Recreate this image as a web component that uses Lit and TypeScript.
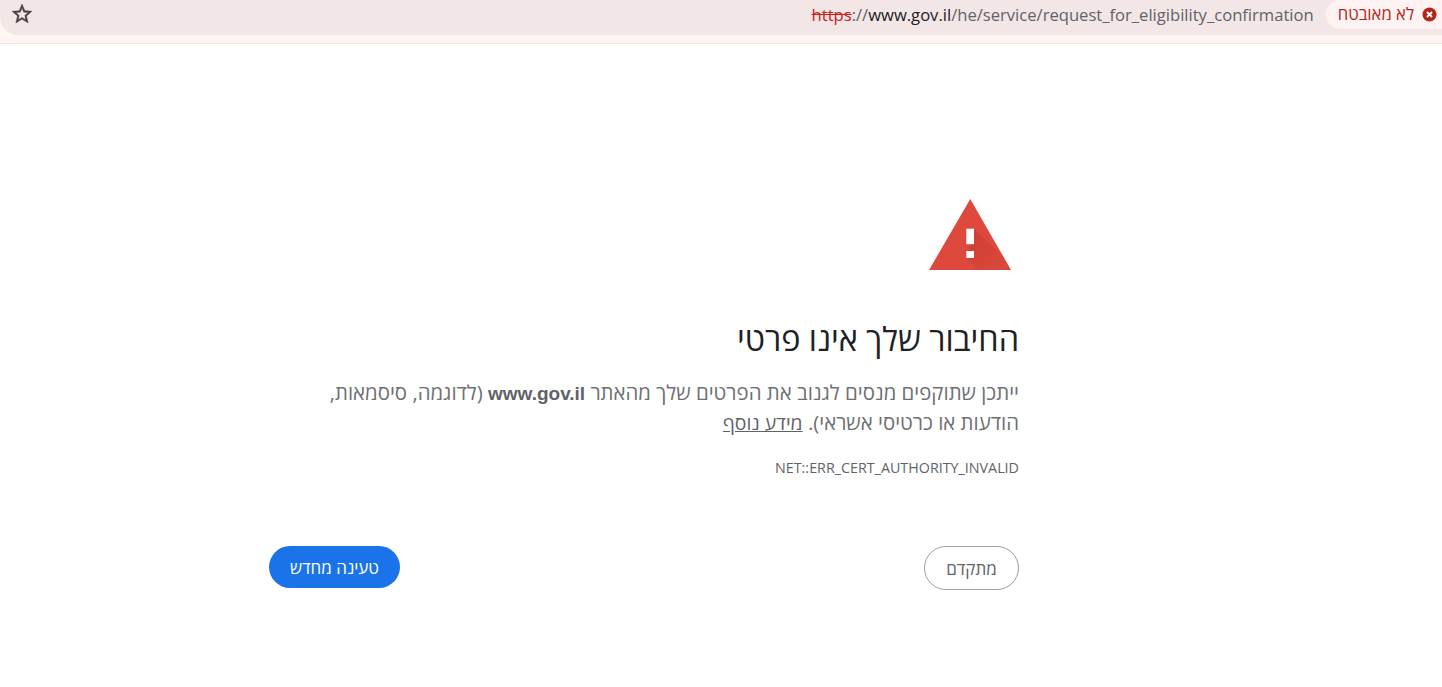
import { LitElement, html, css } from "lit";
import { customElement } from "lit/decorators.js";

@customElement("app-root")
export class AppRoot extends LitElement {
  static styles = css`
    :host { display: block; height: 687px; background: #fff; overflow: hidden; font-family: "Open Sans", "Noto Sans", "Liberation Sans", sans-serif; }
    .chrome { background: #fff5f3; height: 43px; border-bottom: 1px solid #f3e3e1; }
    .bar { height: 35px; background: #f3e6e6; border-bottom-left-radius: 18px; display: flex; align-items: flex-start; padding: 0 0 0 10px; direction: ltr; }
    .star { width: 24px; height: 24px; display: block; margin-top: 2px; flex: none; }
    .url { margin-left: auto; font-size: 16.6px; line-height: 30px; color: #5f6368; white-space: nowrap; }
    .url .s { color: #c5221f; text-decoration: line-through; }
    .url .h { color: #202124; }
    .chip { margin-left: 12px; height: 29px; padding: 0 5px 0 12px; background: #fdf3f2; border-radius: 15px 0 0 15px; display: flex; align-items: center; gap: 8px; font-size: 16.7px; color: #b3261e; direction: rtl; }
    .chip svg { width: 15px; height: 15px; display: block; flex: none; }
    .chip span { margin-top: -2px; }
    main { direction: rtl; width: 750px; margin: 154px 0 0 269px; color: #5f6368; }
    .icon { width: 84px; height: 74px; display: block; margin-right: 7px; }
    h1 { margin: 42px 0 0; font-size: 32.4px; line-height: 48px; font-weight: 400; color: #202124; }
    p { margin: 15px 0 0; font-size: 20.4px; line-height: 30px; color: #6e7074; }
    p b { color: #5f6368; font-family: "Liberation Sans", sans-serif; font-weight: 700; font-size: 19px; line-height: 0; }
    p a { color: #5f6368; text-decoration: underline; font-size: 19.4px; line-height: 0; }
    .code { margin-top: 21px; font-size: 14.3px; line-height: 20px; color: #5f6368; direction: ltr; text-align: right; }
    .btns { display: flex; justify-content: space-between; align-items: flex-start; margin-top: 68px; }
    button { font-family: inherit; font-size: 17px; border-radius: 22px; cursor: pointer; padding: 0; }
    .adv { width: 95px; height: 44px; background: #fff; border: 1px solid #9aa0a6; color: #5f6368; }
    .rel { width: 131px; height: 42px; background: #1a73e8; border: none; color: #fff; }
  `;

  render() {
    return html`
      <div class="chrome">
        <div class="bar">
          <svg class="star" viewBox="0 0 24 24" fill="#4a3f41"><path d="M22 9.24l-7.19-.62L12 2 9.19 8.63 2 9.24l5.46 4.73L5.82 21 12 17.27 18.18 21l-1.63-7.03L22 9.24zM12 15.4l-3.76 2.27 1-4.28-3.32-2.88 4.38-.38L12 6.1l1.71 4.04 4.38.38-3.32 2.88 1 4.28L12 15.4z" stroke="#4a3f41" stroke-width=".4"/></svg>
          <div class="url"><span class="s">https</span><span>:</span>//<span class="h">www.gov.il</span>/he/service/request_for_eligibility_confirmation</div>
          <div class="chip">
            <svg viewBox="0 0 16 16"><circle cx="8" cy="8" r="7.5" fill="#b3261e"/><path d="M5.3 5.3l5.4 5.4M10.7 5.3l-5.4 5.4" stroke="#fff" stroke-width="2" fill="none"/></svg>
            <span>לא מאובטח</span>
          </div>
        </div>
      </div>
      <main>
        <svg class="icon" viewBox="0 0 84 74">
          <defs>
            <linearGradient id="sh" x1="0.15" y1="0.1" x2="0.85" y2="0.9">
              <stop offset="0" stop-color="#c5382b" stop-opacity=".6"/>
              <stop offset="1" stop-color="#c5382b" stop-opacity=".15"/>
            </linearGradient>
          </defs>
          <path d="M42.3 1 L83 72 H1 Z" fill="#dd4a3d"/>
          <path d="M46 30.7 L62 46 L75.5 59 L83 72 H50 L38.3 60 Z" fill="url(#sh)"/>
          <rect x="38.3" y="30.7" width="7.7" height="15.5" fill="#fff"/>
          <rect x="38.3" y="53" width="7.7" height="7" fill="#fff"/>
        </svg>
        <h1>החיבור שלך אינו פרטי</h1>
        <p>ייתכן שתוקפים מנסים לגנוב את הפרטים שלך מהאתר <b>www.gov.il</b> (לדוגמה, סיסמאות, הודעות או כרטיסי אשראי). <a href="#">מידע נוסף</a></p>
        <div class="code">NET::ERR_CERT_AUTHORITY_INVALID</div>
        <div class="btns">
          <button class="adv">מתקדם</button>
          <button class="rel">טעינה מחדש</button>
        </div>
      </main>
    `;
  }
}
